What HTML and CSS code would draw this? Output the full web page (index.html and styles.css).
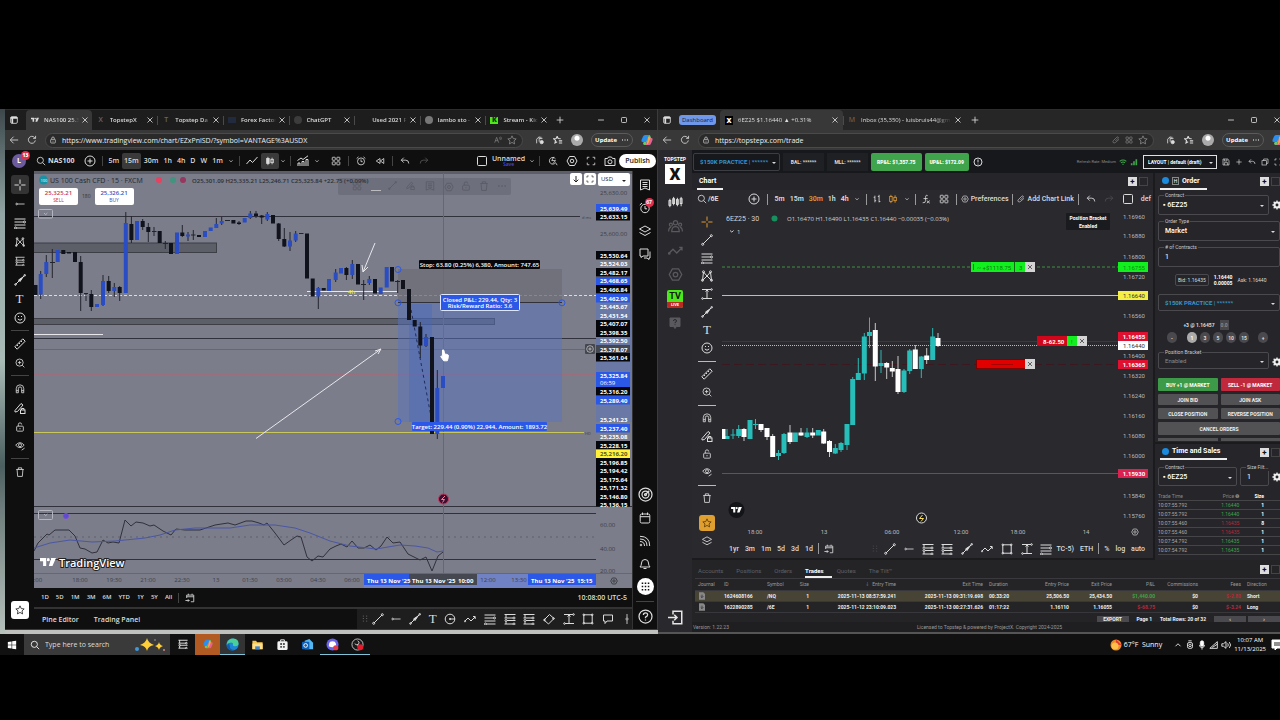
FILE: index.html
```html
<!DOCTYPE html>
<html lang="en">
<head>
    <title>Trading desktop</title>
    <meta charset="UTF-8">
    <link rel="stylesheet" href="styles.css">
</head>
<body>
    <!-- Icon set -->
    <svg class="defs" width="0" height="0">
        <symbol id="win" viewBox="0 0 12 12"><rect x="2" y="2" width="8" height="8" rx="1.5"/><path d="M2 3.500h8M4 4v6" stroke-width="2"/></symbol>
        <symbol id="x" viewBox="0 0 12 12"><path d="M3 3l6 6M9 3l-6 6"/></symbol>
        <symbol id="plus" viewBox="0 0 12 12"><path d="M6 2v8M2 6h8"/></symbol>
        <symbol id="min" viewBox="0 0 12 12"><path d="M2.500 6h7"/></symbol>
        <symbol id="max" viewBox="0 0 12 12"><rect x="3" y="3" width="6" height="6" rx="1"/></symbol>
        <symbol id="back" viewBox="0 0 12 12"><path d="M11 6H2M5.500 2L1.500 6l4 4"/></symbol>
        <symbol id="reload" viewBox="0 0 12 12"><path d="M10 6.500A4.200 4.200 0 1 1 9 3l1.200 1M10.300 1v3h-3"/></symbol>
        <symbol id="lock" viewBox="0 0 12 12"><rect x="2.500" y="5" width="7" height="5.500" rx="1"/><path d="M4 5V3.500a2 2 0 0 1 4 0V5M6 7v1.500"/></symbol>
        <symbol id="unlock" viewBox="0 0 12 12"><rect x="2" y="5" width="8" height="6" rx="1"/><path d="M4 5V3a2 2 0 0 1 4 0M6 7.200v1.600"/></symbol>
        <symbol id="star" viewBox="0 0 12 12"><path d="M6 1l1.500 3.300 3.500.4-2.600 2.400.7 3.600L6 8.900l-3.100 1.800.7-3.600L1 4.700l3.500-.4z"/></symbol>
        <symbol id="starlist" viewBox="0 0 12 12"><path d="M5 1.500l1.200 2.700 3 .3M5 1.500L3.800 4.200l-3 .3L3 6.500l-.6 3L5 8M7 7h4M7 9.500h4" stroke-width="1.300"/></symbol>
        <symbol id="read" viewBox="0 0 12 12"><path d="M1 10l3-8 3 8M2 7h4M8 2q2 1 0 3M10 1q2 2 0 5"/></symbol>
        <symbol id="ext" viewBox="0 0 12 12"><path d="M2 10V5l3-3v6M7 2v3M5 4h4"/><circle cx="8" cy="8.500" r="2" fill="currentColor"/></symbol>
        <symbol id="dots" viewBox="0 0 12 12"><path d="M1.500 6h1.500M5.300 6h1.500M9 6h1.500" stroke-width="1.600"/></symbol>
        <symbol id="copilot" viewBox="0 0 12 12"><g stroke="none"><path d="M4 1h4l-2 7H1.500Q0 8 .5 6L2 2.500Q2.500 1 4 1z" fill="#2a8df0"/><path d="M8 1q1.300 0 1.700 2L10 4H7L5 11H3.500Q2 11 2 9l1-1h2z" fill="#5fd06a"/><path d="M7 4h3.500Q12 4 11.500 6L10 9.500Q9.500 11 8 11H4.500z" fill="#e5609a"/><path d="M7.500 2.500l2 1.500-2 5-2 2z" fill="#f6a93b"/></g></symbol>
        <symbol id="tv" viewBox="0 0 18 10"><path d="M0 0h7v9H3.500V3.500H0zM12.500 0H18l-4 9h-4z" fill="currentColor" stroke="none"/><circle cx="9.300" cy="1.800" r="1.800" fill="currentColor" stroke="none"/></symbol>
        <symbol id="search" viewBox="0 0 12 12"><circle cx="5.200" cy="5.200" r="3.700"/><path d="M8 8l3 3"/></symbol>
        <symbol id="add" viewBox="0 0 12 12"><circle cx="6" cy="6" r="5"/><path d="M6 3.500v5M3.500 6h5"/></symbol>
        <symbol id="chev" viewBox="0 0 12 12"><path d="M3.500 5L6 7.200 8.500 5"/></symbol>
        <symbol id="line" viewBox="0 0 12 12"><path d="M.5 9l3.500-4 2.500 2.500L11.500 2"/></symbol>
        <symbol id="candle" viewBox="0 0 12 12"><path d="M3.500 1v10M8.500 2v8"/><rect x="2" y="3" width="3" height="6" fill="currentColor"/><rect x="7" y="4" width="3" height="4"/></symbol>
        <symbol id="candleo" viewBox="0 0 12 12"><path d="M3.500 1v2M3.500 9v2M8.500 1.500V4M8.500 8v2.500"/><rect x="2" y="3" width="3" height="6"/><rect x="7" y="4" width="3" height="4"/></symbol>
        <symbol id="bars" viewBox="0 0 12 12"><path d="M3.500 2v8M2 4h1.500M3.500 8H5M8.500 1v9M7 3h1.500M8.500 9H10"/></symbol>
        <symbol id="ind" viewBox="0 0 12 12"><path d="M1 11V8h2v3M5 11V6.500h2V11M9 11V4.500h2V11M.5 5.500L4 3l2 1.500L11 .8"/></symbol>
        <symbol id="grid" viewBox="0 0 12 12"><rect x="1.500" y="1.500" width="3.600" height="3.600" rx=".6"/><rect x="7" y="1.500" width="3.600" height="3.600" rx=".6"/><rect x="1.500" y="7" width="3.600" height="3.600" rx=".6"/><rect x="7" y="7" width="3.600" height="3.600" rx=".6"/></symbol>
        <symbol id="alarm" viewBox="0 0 12 12"><circle cx="6" cy="6.500" r="4.200"/><path d="M6 4v2.800h2M.8 3L3 1M9 1l2.200 2"/></symbol>
        <symbol id="rew" viewBox="0 0 12 12"><path d="M6 3v6L1.500 6zM10.500 3v6L6.500 6z"/></symbol>
        <symbol id="undo" viewBox="0 0 12 12"><path d="M4.500 2L1.500 5l3 3M1.500 5H7q3.500 0 3.500 4"/></symbol>
        <symbol id="redo" viewBox="0 0 12 12"><path d="M7.500 2l3 3-3 3M10.500 5H5Q1.500 5 1.500 9"/></symbol>
        <symbol id="downarr" viewBox="0 0 12 12"><path d="M6 1.500v9M2.500 7L6 10.500 9.500 7" stroke-width="1.500"/></symbol>
        <symbol id="box" viewBox="0 0 12 12"><rect x="1.500" y="1.500" width="9" height="9" rx="1"/></symbol>
        <symbol id="flash" viewBox="0 0 12 12"><path d="M9 3.500A4 4 0 1 0 9 8l2 3M7 1L4.500 5.500H9L6 9"/></symbol>
        <symbol id="gear" viewBox="0 0 12 12"><path d="M3.500 1.500h5L11 6l-2.500 4.500h-5L1 6z"/><circle cx="6" cy="6" r="1.800"/></symbol>
        <symbol id="cog" viewBox="0 0 12 12"><circle cx="6" cy="6" r="3" stroke-width="2.500"/><path d="M6 .5v2M6 9.500v2M.5 6h2M9.500 6h2M2 2l1.500 1.500M8.500 8.500L10 10M2 10l1.500-1.500M8.500 3.500L10 2" stroke-width="1.600"/></symbol>
        <symbol id="full" viewBox="0 0 12 12"><path d="M1.500 4V1.500H4M8 1.500h2.500V4M10.500 8v2.500H8M4 10.500H1.500V8"/></symbol>
        <symbol id="cam" viewBox="0 0 12 12"><path d="M1 3.500h2.500l1-1.500h3l1 1.500H11v7H1z"/><circle cx="6" cy="6.800" r="2"/></symbol>
        <symbol id="cross" viewBox="0 0 12 12"><path d="M6 .5v4.300M6 7.200v4.300M.5 6h4.300M7.200 6h4.300"/></symbol>
        <symbol id="hline" viewBox="0 0 12 12"><circle cx="2" cy="6" r="1"/><path d="M3 6h8.500"/></symbol>
        <symbol id="fib" viewBox="0 0 12 12"><path d="M.5 2h11M.5 5h9M.5 8h11M2.500 11h9"/><circle cx="10.500" cy="5" r="1"/><circle cx="1.500" cy="11" r="1"/></symbol>
        <symbol id="pat" viewBox="0 0 12 12"><path d="M1.500 10.500L2.500 2l3.500 4L9.500 2l1 8.500L6 6z"/><circle cx="2.500" cy="1.800" r="1"/><circle cx="9.500" cy="1.800" r="1"/><circle cx="1.500" cy="10.300" r="1"/><circle cx="10.500" cy="10.300" r="1"/></symbol>
        <symbol id="pos" viewBox="0 0 12 12"><path d="M.5 1.500h11M.5 5h8.500M3 7.500h8.500M.5 11h8.500M2 1.500V5M2 8.500V11"/><circle cx="10" cy="5" r="1"/><circle cx="2" cy="7.500" r="1"/><circle cx="10" cy="11" r="1"/></symbol>
        <symbol id="trend" viewBox="0 0 12 12"><path d="M2 10l8-8"/><circle cx="1.700" cy="10.300" r="1"/><circle cx="10.300" cy="1.700" r="1"/></symbol>
        <symbol id="arrow" viewBox="0 0 12 12"><path d="M1.500 10.500l9-9"/><path d="M4.500 6l4.500-3-3 4.500z" fill="currentColor"/><circle cx="1.500" cy="10.500" r=".8"/><circle cx="10.700" cy="1.300" r=".8"/></symbol>
        <symbol id="smile" viewBox="0 0 12 12"><circle cx="6" cy="6" r="5"/><path d="M3.800 7Q6 9.500 8.200 7M4.500 4v1M7.500 4v1"/></symbol>
        <symbol id="ruler" viewBox="0 0 12 12"><path d="M.8 8.800l8-8 2.400 2.400-8 8zM3 7l1 1M5 5l1 1M7 3l1 1"/></symbol>
        <symbol id="zoom" viewBox="0 0 12 12"><circle cx="5.500" cy="5.500" r="4.300"/><path d="M8.700 8.700l2.500 2.500M5.500 3.500v4M3.500 5.500h4"/></symbol>
        <symbol id="magnet" viewBox="0 0 12 12"><path d="M1.500 10.500V5.500a4.500 4.500 0 0 1 9 0v5H8v-5a2 2 0 0 0-4 0v5zM1.500 8H4M8 8h2.500"/></symbol>
        <symbol id="penlock" viewBox="0 0 12 12"><path d="M1 8.500l6-7 2 1.500-5.500 6.500L1 10z"/><rect x="6.500" y="8" width="4.500" height="3.500"/><path d="M7.500 8V6.500h2.500V8"/></symbol>
        <symbol id="eye" viewBox="0 0 12 12"><path d="M.8 5Q6-1 11 5 6 11 .8 5z"/><circle cx="6" cy="5" r="1.800"/><path d="M8 11l3.500-2.500"/></symbol>
        <symbol id="trash" viewBox="0 0 12 12"><path d="M1.500 3h9M4 3V1h4v2M2.500 3l.7 8.300h5.600L9.500 3"/></symbol>
        <symbol id="list" viewBox="0 0 12 12"><path d="M1.500 1h9v10L6 9l-4.500 2zM3.500 3.500h5M3.500 5.500h5M3.500 7.500h5"/></symbol>
        <symbol id="layers" viewBox="0 0 12 12"><path d="M6 1l5.500 3L6 7 .5 4zM.5 7.500L6 10.500l5.500-3"/></symbol>
        <symbol id="chat" viewBox="0 0 12 12"><path d="M1 1h8v7H4L2 9.500V8H1zM11 3.500v6.500h-1v1.500L8 10H5"/></symbol>
        <symbol id="target" viewBox="0 0 12 12"><circle cx="6" cy="6" r="5.200"/><circle cx="6" cy="6" r="2.800"/><path d="M6 6l3-3"/><circle cx="6" cy="6" r=".8"/></symbol>
        <symbol id="cal" viewBox="0 0 12 12"><rect x="1.200" y="2" width="9.600" height="9" rx="1.500"/><path d="M1.200 4.700h9.600M3.500.5V3M8.500.5V3"/></symbol>
        <symbol id="goto" viewBox="0 0 12 12"><path d="M2 6V2.500h8.500V10.500H7M2 4.500h8.500M4 .8v2M8.500.8v2M.5 9h4.500M3.500 7.500L5 9l-1.500 1.500"/></symbol>
        <symbol id="rss" viewBox="0 0 12 12"><circle cx="2" cy="10" r=".8"/><path d="M1 6.500q4.500 0 4.500 4.500M1 4q7 0 7 7M1 1.300q9.700 0 9.700 9.700"/></symbol>
        <symbol id="wifi" viewBox="0 0 12 12"><path d="M1 5q5-4 10 0M3 7.300q3-2.400 6 0M5 9.500h2" stroke-width="1.600"/></symbol>
        <symbol id="signal" viewBox="0 0 12 12"><path d="M2.500 11V8M6 11V5M9.500 11V2" stroke-width="2.500"/></symbol>
        <symbol id="bell" viewBox="0 0 12 12"><path d="M1 9h10Q9.500 7.500 9.500 5a3.500 3.500 0 0 0-7 0Q2.500 7.500 1 9zM4.500 10.500h3"/></symbol>
        <symbol id="apps" viewBox="0 0 12 12"><path d="M2.500 3h1.400M5.300 3h1.400M8.100 3h1.400M2.500 6h1.400M5.300 6h1.400M8.100 6h1.400M2.500 9h1.400M5.300 9h1.400M8.100 9h1.400" stroke-width="1.400"/></symbol>
        <symbol id="help" viewBox="0 0 12 12"><circle cx="6" cy="6" r="5.200"/><path d="M4.300 4.700q0-1.700 1.700-1.700t1.700 1.500Q7.700 5.700 6 6.500v.8M6 8.400v.8"/></symbol>
        <symbol id="helpbox" viewBox="0 0 12 12"><path d="M1 1h10v8.500H7.500L6 11.500 4.500 9.500H1z" fill="currentColor"/><path d="M4.500 4q0-1.500 1.500-1.500T7.500 4Q7.500 5 6 5.500v.7M6 7.300v.8" stroke="#29282c"/></symbol>
        <symbol id="info" viewBox="0 0 12 12"><circle cx="6" cy="6" r="4.800"/><path d="M6 3v3.500M6 8v1"/></symbol>
        <symbol id="wave" viewBox="0 0 12 12"><path d="M1 8l3-3 3 3 4-4M9 3.500h2.200V6"/><circle cx="1" cy="8.300" r=".6"/></symbol>
        <symbol id="circ" viewBox="0 0 12 12"><circle cx="6" cy="6" r="4.800"/><circle cx="6" cy="6" r=".7"/><path d="M6 6h5"/></symbol>
        <symbol id="rot" viewBox="0 0 12 12"><path d="M1 7l5.500-5.500 4.500 4L5.500 11z"/><circle cx="1.500" cy="7" r=".8"/><circle cx="10.500" cy="5.500" r=".8"/></symbol>
        <symbol id="measure" viewBox="0 0 12 12"><path d="M1 1.500h9M2 10.500h9M6 2v8M4.500 3.500L6 2l1.500 1.500"/><circle cx="10.500" cy="1.500" r=".8"/><circle cx="1.500" cy="10.500" r=".8"/></symbol>
        <symbol id="rect" viewBox="0 0 12 12"><rect x="1.800" y="1.800" width="8.400" height="8.400"/><circle cx="1.800" cy="1.800" r=".8"/><circle cx="10.200" cy="1.800" r=".8"/><circle cx="1.800" cy="10.200" r=".8"/><circle cx="10.200" cy="10.200" r=".8"/></symbol>
        <symbol id="flag" viewBox="0 0 12 12"><path d="M1.500 2h9v6H5l-2 2.500V8H1.500z"/></symbol>
        <symbol id="vline" viewBox="0 0 12 12"><path d="M6 0v4.500M6 7.500V12"/><circle cx="6" cy="6" r="1.300"/></symbol>
        <symbol id="grip" viewBox="0 0 12 12"><path d="M4 2v1M4 5v1M4 8v1M8 2v1M8 5v1M8 8v1"/></symbol>
        <symbol id="oc" viewBox="0 0 16 14"><path d="M2 3v9M6 1v9M10 2v9M14 1v10"/><rect x="1" y="5" width="2" height="5"/><rect x="5" y="3" width="2" height="5"/><rect x="9" y="4" width="2" height="5"/><rect x="13" y="3" width="2" height="5"/></symbol>
        <symbol id="people" viewBox="0 0 12 12"><circle cx="6" cy="3" r="1.700"/><circle cx="2.300" cy="4.500" r="1.200"/><circle cx="9.700" cy="4.500" r="1.200"/><path d="M3 10q0-4 3-4t3 4zM.5 10q0-3 2-3.500M11.500 10q0-3-2-3.500"/></symbol>
        <symbol id="exit" viewBox="0 0 12 12"><path d="M4 3.500V1h7v10H4V8.500M0 6h7M5 3.800L7.200 6 5 8.200" stroke-width="1.200"/></symbol>
        <symbol id="link" viewBox="0 0 12 12"><path d="M5 7.500L9 3.500Q10 2 9 1.500T7 2L2 7Q.5 9 2 10t3.500-.5L10.500 5"/></symbol>
        <symbol id="fx" viewBox="0 0 12 12"><path d="M8 2Q5.500.5 5.500 4v4q0 3-3.500 2.500M3 5.500h5M7 8l3.500 3M10.500 8L7 11"/></symbol>
        <symbol id="save" viewBox="0 0 12 12"><path d="M1.500 1.500h7l2 2v7h-9zM3.500 1.500v3h4v-3M3.500 10.500V7h5v3.500"/></symbol>
        <symbol id="copy" viewBox="0 0 12 12"><rect x="1.500" y="4" width="6.500" height="6.500"/><path d="M4 4V1.500h6.500V8H8"/></symbol>
        <symbol id="doc" viewBox="0 0 12 12"><path d="M1.500.5H8l2.500 2.500v8.500h-9z" fill="currentColor" stroke="none"/><path d="M6 4v4M4 6.500L6 8.500l2-2" stroke="#222"/></symbol>
    </svg>

    <main class="stage">
        <div class="desktop">
            <div class="wall"></div>

            <!-- Left browser -->
            <section class="window tvwin">
                <div class="tabstrip">
                    <svg class="i lead"><use href="#win"/></svg>
                    <div class="tabs">
                        <div class="tab on"><svg class="fav"><use href="#tv"/></svg><span>NAS100 25.3</span><button><svg class="i"><use href="#x"/></svg></button></div>
                        <div class="tab nosep"><i class="fav dim">X</i><span>TopstepX</span><button><svg class="i"><use href="#x"/></svg></button></div>
                        <div class="tab"><i class="fav dim">T</i><span>Topstep Da</span><button><svg class="i"><use href="#x"/></svg></button></div>
                        <div class="tab"><i class="fav navy"></i><span>Forex Factor</span><button><svg class="i"><use href="#x"/></svg></button></div>
                        <div class="tab"><i class="fav round"></i><span>ChatGPT</span><button><svg class="i"><use href="#x"/></svg></button></div>
                        <div class="tab"><i class="fav"></i><span>Used 2021 F</span><button><svg class="i"><use href="#x"/></svg></button></div>
                        <div class="tab"><i class="fav round grey"></i><span>lambo sto -</span><button><svg class="i"><use href="#x"/></svg></button></div>
                        <div class="tab"><i class="fav kick">K</i><span>Stream - Kic</span><button><svg class="i"><use href="#x"/></svg></button></div>
                    </div>
                    <button class="newtab"><svg class="i"><use href="#plus"/></svg></button>
                    <div class="winbtns"><button><svg class="i"><use href="#min"/></svg></button><button><svg class="i"><use href="#max"/></svg></button><button><svg class="i"><use href="#x"/></svg></button></div>
                </div>
                <div class="address">
                    <button class="nav"><svg class="i"><use href="#back"/></svg></button>
                    <button class="nav"><svg class="i"><use href="#reload"/></svg></button>
                    <div class="urlbar">
                        <svg class="i sm"><use href="#lock"/></svg>
                        <input type="text" aria-label="Address" value="https://www.tradingview.com/chart/EZxPnlSD/?symbol=VANTAGE%3AUSDX">
                        <svg class="i sm dimmed"><use href="#read"/></svg><svg class="i dimmed"><use href="#star"/></svg>
                    </div>
                    <svg class="i"><use href="#ext"/></svg><svg class="i"><use href="#starlist"/></svg>
                    <i class="avatar"></i>
                    <button class="update">Update <svg class="i sm"><use href="#dots"/></svg></button>
                    <svg class="i big"><use href="#copilot"/></svg>
                </div>

                <div class="tvtop">
                    <div class="user">L<b class="badge">13</b></div>
                    <button class="sym"><svg class="i"><use href="#search"/></svg>NAS100</button>
                    <button class="ic plusic"><svg class="i big"><use href="#add"/></svg></button>
                    <i class="sep"></i>
                    <div class="times"><button>5m</button><button class="on">15m</button><button>30m</button><button>1h</button><button>4h</button><button>D</button><button>W</button><button>1m</button><svg class="i sm"><use href="#chev"/></svg></div>
                    <i class="sep"></i>
                    <button class="ic"><svg class="i big"><use href="#line"/></svg></button>
                    <button class="ic on"><svg class="i"><use href="#candle"/></svg></button>
                    <svg class="i sm"><use href="#chev"/></svg>
                    <i class="sep"></i>
                    <button class="ic wide"><svg class="i big"><use href="#ind"/></svg></button>
                    <svg class="i sm spaced"><use href="#chev"/></svg>
                    <button class="ic"><svg class="i"><use href="#grid"/></svg></button>
                    <i class="sep"></i>
                    <button class="ic wide"><svg class="i"><use href="#alarm"/></svg></button>
                    <button class="ic"><svg class="i"><use href="#rew"/></svg></button>
                    <i class="sep"></i>
                    <button class="ic wide"><svg class="i"><use href="#undo"/></svg></button>
                    <button class="ic dark"><svg class="i"><use href="#redo"/></svg></button>
                    <div class="tvright">
                        <svg class="i big"><use href="#box"/></svg>
                        <div class="layoutname">Unnamed<a href="#">Save</a></div>
                        <svg class="i sm"><use href="#chev"/></svg>
                        <i class="sep"></i>
                        <button class="ic wide"><svg class="i"><use href="#flash"/></svg></button>
                        <button class="ic wide"><svg class="i big"><use href="#gear"/></svg></button>
                        <button class="ic wide"><svg class="i"><use href="#full"/></svg></button>
                        <button class="ic wide"><svg class="i big"><use href="#cam"/></svg></button>
                        <button class="publish">Publish</button>
                    </div>
                </div>

                <div class="tvmain">
                    <nav class="tools">
                        <button class="on"><svg class="i big"><use href="#cross"/></svg></button>
                        <button><svg class="i"><use href="#hline"/></svg></button>
                        <button><svg class="i big"><use href="#fib"/></svg></button>
                        <button><svg class="i"><use href="#pat"/></svg></button>
                        <button><svg class="i"><use href="#pos"/></svg></button>
                        <button><svg class="i big"><use href="#arrow"/></svg></button>
                        <button class="t">T</button>
                        <button><svg class="i big"><use href="#smile"/></svg></button>
                        <hr>
                        <button><svg class="i big"><use href="#ruler"/></svg></button>
                        <button><svg class="i"><use href="#zoom"/></svg></button>
                        <hr>
                        <button><svg class="i"><use href="#magnet"/></svg></button>
                        <button><svg class="i big"><use href="#penlock"/></svg></button>
                        <button><svg class="i"><use href="#unlock"/></svg></button>
                        <button><svg class="i"><use href="#eye"/></svg></button>
                        <hr>
                        <button><svg class="i"><use href="#trash"/></svg></button>
                        <button class="fave"><svg class="i"><use href="#star"/></svg></button>
                    </nav>

                    <div class="center">
                        <div class="chart">
                            <svg class="plot" viewBox="34 171 598 417">
                                <path d="M34 172.500h598" class="edge"/>
                                <!-- zones and levels -->
                                <rect x="30" y="243" width="186.500" height="9.500" class="zone"/>
                                <rect x="30" y="318.500" width="464.500" height="6" class="zone"/>
                                <path d="M34 216.500H580M34 338.500H596M34 506.500H632M34 513.500H596M34 559.500H596" class="level"/>
                                <path d="M34 349.500H585M443.500 173V573M34 573.500H632" class="faint"/>
                                <path d="M34 374.500H596" class="redline"/>
                                <path d="M34 537H596" class="rsimid"/>
                                <path d="M34 432.500H584" class="yellow"/>
                                <path d="M34 295.500H596" class="whitedash"/>
                                <path d="M34 334.500H103M307 291.500H397" class="white"/>
                                <rect x="398" y="269" width="164" height="33.500" class="stopbox"/>
                                <rect x="398" y="302.500" width="164" height="119.500" class="targetbox"/>
                                <rect x="409" y="304" width="23" height="118" class="targetdeep"/>
                                <rect x="596" y="302" width="36" height="120" class="targetbox"/>
                                <path d="M398 302.500H562" class="level"/>
                                <path d="M410 304L432 422" class="dashdark"/>
                                <!-- candles -->
                                <path class="wick" d="M40.700 271V299M46.300 255V277M52.300 249V278M80.700 256V311M86 293V301M91.300 290V311M103 275V306M108.700 276V293M114.300 283V297M119.700 286V301M125.800 212V293M131.400 216V243M142.700 219V230M148.300 223V242M154 227V236M165.300 241V249M182.300 225V237M188 232V241M193.300 230V240M216.300 218V228M221.700 217V225M239 221V225M250.300 211V219M256 211V218M261.700 215V224M267.300 212V221M278.700 223V241M284.300 228V247M290 232V251M295.700 231V242M318.300 287V309M335.700 269V282M346.400 267V280M352.300 260V279M363.700 280V300M369.300 276V285M397.700 280V293M420.300 322V358M426 334V347M437.300 370V439"/>
                                <path class="wick" d="M50 262.500h5M84 293.500h4M152 231.500h4.500M163 243.500h5M191 235h4.500M225 220.500h5M299 233.500h4.500M361 284.500h5M395 281.500h5"/>
                                <path class="down" d="M35.500 285V295M63.300 250V254M69 252V253.500M75 252V262M80.700 262V293M91.300 294V307M108.700 281V291M119.700 287V293M131.400 224V240M142.700 221V227M148.300 227V232M159.700 231V243M171 243V254M182.300 232.500V236M199 235V237M233.400 220V223.500M239 222.500V224M256 213.500V216M261.700 215.500V217.500M273 215V223.500M278.700 223.500V239M284.300 239V246.500M307 233.500V278.500M312.700 278.500V296.500M323.700 288V290.500M346.400 268V275M358 264V284.500M375 279V293.500M392 267V281.500M403 280V289M409 289V320M414.700 320V326.500M420.300 326.500V345.500M432 337V434"/>
                                <path class="up" d="M40.700 274V294.500M46.300 262V274M57.700 250V262M97 304V307M103 281V305M114.300 287V291M125.800 223V293M137 221V240M177 232.500V254M188 234.500V236.500M205 231V237M210.700 227.500V231M216.300 224V228M221.700 221V223.500M244.700 218V222.500M250.300 213.500V218M267.300 214V219.500M290 240.500V246.500M295.700 233.500V240.500M318.300 288V296.500M329 279V291M335.700 272.500V280M341 268V273.500M352.300 264V275M369.300 279V283M380.700 287.500V294M386.700 267V287.500M426 337V346M437.300 388V434M443 376V388"/>
                                <!-- drawings -->
                                <path class="white" d="M256 438.500L381 349M375 351l6-2-3 5M375 243l-12 29M362 265l1 7 5-5"/>
                                <text x="348" y="294" class="tag gold">4h</text>
                                <g class="handles"><circle cx="398" cy="269.500" r="3"/><circle cx="398" cy="302.800" r="3"/><circle cx="562" cy="302.800" r="3"/><circle cx="398" cy="421.500" r="3"/></g>
                                <rect x="419" y="260" width="121" height="9" rx="1" class="k"/>
                                <text x="479.500" y="267" class="tag mid">Stop: 63.80 (0.25%) 6,380, Amount: 747.65</text>
                                <rect x="440.500" y="294.500" width="79" height="16" rx="1" class="b outlined"/>
                                <text x="480" y="302" class="tag mid">Closed P&amp;L: 229.44, Qty: 3</text>
                                <text x="480" y="308" class="tag mid">Risk/Reward Ratio: 3.6</text>
                                <rect x="412" y="422" width="135" height="9" rx="1" class="b"/>
                                <text x="479.500" y="429" class="tag mid">Target: 229.44 (0.90%) 22,944, Amount: 1893.72</text>
                                <circle cx="443.500" cy="499" r="5" fill="#3a1030" stroke="#c03a60"/><path d="M445 496l-3.500 3.500h3l-2 3" stroke="#ff7b9c" fill="none"/>
                                <path class="hand" d="M442.500 350q1.200-.6 1.500.8l.6 3.200 2 .3 1.800.9-.3 3-.8 2.600h-3.600l-1.600-2.300-1.400-2q.6-.9 1.700.2z"/>
                                <!-- rsi -->
                                <path class="rsi" d="M34 551L38 543 47 534 49 535 55 530H69L75 536 80 548 85 549 92 553 97 552 103 540 108 543 113 542 119 543 125 520 131 526 136 522 143 523 150 526 154 525 163 531 171 535 176 529 185 530H200L215 525 228 523 235 525 246 521H252L259 523 264 525 267 523 275 533 284 545 291 540 297 536 301 537 307 557 312 561 318 556 323 557 330 549 336 546 341 544 347 547 352 541 358 548H364L370 545 376 550 381 546 387 537 393 543 400 542 408 554 420 560 426 557 432 571 438 556 443 552"/>
                                <path class="rsima" d="M34 548L50 543 70 540 92 542 115 541 145 538 160 535 175 530 195 528H230L250 525H275L295 528 310 533 330 541 350 546 376 549 400 545 415 546 428 548 437 552 443 551"/>
                                <rect x="38.500" y="510.500" width="14" height="9" rx="1" class="ghost"/><path d="M44 514l1.700 1.700 1.700-1.700" class="ghost"/>
                                <circle cx="66" cy="516" r="2.500" fill="#5a4fc8" stroke="#7a4be0"/>
                                <svg x="40" y="558" width="16" height="9" color="#fff"><use href="#tv"/></svg>
                                <text x="59" y="566.500" class="brand">TradingView</text>
                                <!-- legend -->
                                <circle cx="43.500" cy="180" r="4.500" fill="#1793a5"/><text x="40.500" y="182" class="tiny">100</text>
                                <text x="50" y="182.500" class="title">US 100 Cash CFD · 15 · FXCM</text>
                                <circle cx="159" cy="180" r="3" fill="#e8405f"/><circle cx="173" cy="180" r="3" fill="#41957f"/><circle cx="183" cy="180" r="3" fill="#96375f"/>
                                <rect x="338" y="178" width="173" height="17" rx="2" fill="#5e606b" opacity=".45"/>
                                <text x="192" y="182.500" class="ohlc">O25,301.09 H25,335.21 L25,246.71 C25,325.84 +22.75 (+0.09%)</text>
                                <g class="floaticons">
                                    <use href="#grid" x="352" y="181" width="10" height="10"/><path d="M371 190.500h10" stroke="#ddd"/><use href="#trend" x="388" y="181" width="9" height="9"/><use href="#penlock" x="406" y="181" width="9" height="9"/><use href="#list" x="425" y="181" width="10" height="10"/><use href="#gear" x="444" y="182" width="10" height="10"/><use href="#unlock" x="461" y="181" width="10" height="10"/><use href="#trash" x="479" y="181" width="10" height="10"/><use href="#dots" x="497" y="181" width="10" height="10"/>
                                </g>
                                <rect x="38.500" y="209.500" width="14" height="8.500" rx="1" class="ghost"/><path d="M44 213l1.700 1.700 1.700-1.700" class="ghost"/>
                                <text x="582" y="218.500" class="tiny dk">d ms</text><text x="585" y="434.500" class="tiny dk">HD</text>
                                <rect x="585" y="344" width="10" height="10" rx="1" fill="#45474f"/><use href="#add" x="586" y="345" width="8" height="8" class="wh"/>
                                <!-- price axis -->
                                <g class="k"><rect x="596" y="212" width="34" height="8.500"/><rect x="596" y="251" width="34" height="8.500"/><rect x="596" y="268" width="34" height="8.500"/><rect x="596" y="285" width="34" height="8.500"/><rect x="596" y="320" width="34" height="17"/><rect x="596" y="353" width="34" height="8.500"/><rect x="596" y="387" width="34" height="8.500"/><rect x="596" y="441" width="34" height="8.500"/><rect x="596" y="458" width="34" height="48.500"/></g>
                                <g class="b"><rect x="596" y="204" width="34" height="8"/><rect x="596" y="277" width="34" height="8"/><rect x="596" y="294" width="34" height="8.500"/><rect x="596" y="372" width="34" height="15"/><rect x="596" y="396" width="34" height="8.500"/><rect x="596" y="424" width="34" height="8.500"/></g>
                                <rect x="596" y="345" width="34" height="8" fill="#454850"/><rect x="596" y="449.500" width="34" height="8.500" fill="#fff13a"/>
                                <g class="axis"><text x="600" y="194.500">25,630.00</text><text x="600" y="235.500">25,600.00</text><text x="600" y="526.500">60.00</text><text x="600" y="550.500">40.00</text><text x="600" y="573">20.00</text></g>
                                <g class="price">
                                    <text x="600" y="210.500">25,639.49</text><text x="600" y="218.500">25,633.15</text><text x="600" y="257.500">25,530.64</text><text x="600" y="266">25,524.03</text><text x="600" y="274.500">25,482.17</text><text x="600" y="283">25,468.65</text><text x="600" y="291.500">25,466.84</text><text x="600" y="300.500">25,462.90</text><text x="600" y="309">25,445.67</text><text x="600" y="317.500">25,431.54</text><text x="600" y="326">25,407.07</text><text x="600" y="334.500">25,398.35</text><text x="600" y="343">25,392.50</text><text x="600" y="351.500">25,378.07</text><text x="600" y="359.500">25,361.04</text><text x="600" y="378">25,325.84</text><text x="600" y="385" class="thin">06:59</text><text x="600" y="393.500">25,316.20</text><text x="600" y="402.500">25,289.40</text><text x="600" y="421.500">25,241.23</text><text x="600" y="430.500">25,237.40</text><text x="600" y="438.500">25,235.08</text><text x="600" y="447.500">25,228.15</text><text x="600" y="456" class="onyellow">25,216.20</text><text x="600" y="464.500">25,196.85</text><text x="600" y="473">25,194.42</text><text x="600" y="481.500">25,175.64</text><text x="600" y="490">25,171.32</text><text x="600" y="498.500">25,146.80</text><text x="600" y="506.500">25,136.15</text>
                                </g>
                                <!-- time axis -->
                                <g class="axis mid"><text x="38" y="582">:00</text><text x="80" y="582">18:00</text><text x="114" y="582">19:30</text><text x="148" y="582">21:00</text><text x="182" y="582">22:30</text><text x="216" y="582">13</text><text x="250" y="582">01:30</text><text x="284" y="582">03:00</text><text x="318" y="582">04:30</text><text x="352" y="582">06:00</text></g>
                                <rect x="364" y="574" width="232" height="14" fill="#7182c4"/>
                                <g class="axis mid"><text x="488" y="582">12:00</text><text x="519" y="582">13:30</text></g>
                                <rect x="364" y="574" width="45" height="11" class="b"/><rect x="409" y="574" width="68" height="11" fill="#454850"/><rect x="528" y="574" width="68" height="11" class="b"/>
                                <g class="price"><text x="367" y="582.500">Thu 13 Nov '25</text><text x="412" y="582.500">Thu 13 Nov '25</text><text x="458" y="582.500">10:00</text><text x="531" y="582.500">Thu 13 Nov '25</text><text x="577" y="582.500">15:15</text></g>
                                <use href="#gear" x="610" y="577" width="8" height="8" class="bk"/>
                            </svg>
                            <div class="trade"><button class="sell">25,325.21<small>SELL</small></button><span>180</span><button class="buy">25,326.21<small>BUY</small></button></div>
                            <div class="currency"><button><svg class="i sm"><use href="#downarr"/></svg></button><button><svg class="i sm"><use href="#full"/></svg></button><span class="pick"><select aria-label="Currency"><option>USD</option></select></span></div>
                        </div>
                        <div class="ranges"><button>1D</button><button>5D</button><button>1M</button><button>3M</button><button>6M</button><button>YTD</button><button>1Y</button><button>5Y</button><button>All</button><i class="sep"></i><svg class="i"><use href="#goto"/></svg><time>10:08:00 UTC-5</time></div>
                        <div class="footer">
                            <button>Pine Editor</button><button>Trading Panel</button>
                            <div class="drawbar"><svg class="i dimmed grip"><use href="#grip"/></svg><svg class="i big"><use href="#trend"/></svg><svg class="i"><use href="#hline"/></svg><svg class="i big"><use href="#arrow"/></svg><b>T</b><svg class="i big"><use href="#circ"/></svg><svg class="i big"><use href="#wave"/></svg><svg class="i big"><use href="#fib"/></svg><svg class="i big"><use href="#pos"/></svg><svg class="i big"><use href="#pos"/></svg><svg class="i big"><use href="#rot"/></svg><svg class="i big"><use href="#measure"/></svg><svg class="i big"><use href="#rect"/></svg><svg class="i big"><use href="#flag"/></svg><svg class="i"><use href="#vline"/></svg></div>
                        </div>
                    </div>

                    <nav class="side">
                        <button><svg class="i big"><use href="#list"/></svg></button>
                        <button><svg class="i big"><use href="#alarm"/></svg><b class="badge">67</b></button>
                        <button><svg class="i big"><use href="#layers"/></svg></button>
                        <button><svg class="i big"><use href="#chat"/></svg></button>
                        <button class="push"><svg class="i huge"><use href="#target"/></svg></button>
                        <button><svg class="i big"><use href="#cal"/></svg></button>
                        <button><svg class="i big"><use href="#rss"/></svg></button>
                        <button><svg class="i big"><use href="#bell"/></svg></button>
                        <button><svg class="i apps"><use href="#apps"/></svg></button>
                        <hr>
                        <button><svg class="i huge"><use href="#help"/></svg></button>
                    </nav>
                </div>
            </section>

            <!-- Right browser -->
            <section class="window tswin">
                <div class="tabstrip">
                    <svg class="i lead"><use href="#win"/></svg>
                    <a class="group" href="#">Dashboard</a>
                    <div class="tab wide on"><i class="fav xfav">X</i><span>6EZ25 $1.16440 ▲ +0.31%</span><button><svg class="i"><use href="#x"/></svg></button></div>
                    <div class="tab wide mail"><i class="fav m">M</i><span>Inbox (35,350) - luisbruis44@gm</span><button><svg class="i"><use href="#x"/></svg></button></div>
                    <button class="newtab"><svg class="i"><use href="#plus"/></svg></button>
                    <div class="winbtns"><button><svg class="i"><use href="#min"/></svg></button><button><svg class="i"><use href="#max"/></svg></button><button><svg class="i"><use href="#x"/></svg></button></div>
                </div>
                <div class="address">
                    <button class="nav"><svg class="i"><use href="#back"/></svg></button>
                    <button class="nav"><svg class="i"><use href="#reload"/></svg></button>
                    <div class="urlbar">
                        <svg class="i sm"><use href="#lock"/></svg>
                        <input type="text" aria-label="Address" value="https://topstepx.com/trade">
                        <svg class="i sm dimmed"><use href="#link"/></svg><svg class="i sm dimmed"><use href="#grid"/></svg><svg class="i dimmed"><use href="#star"/></svg>
                    </div>
                    <svg class="i"><use href="#ext"/></svg><svg class="i"><use href="#starlist"/></svg>
                    <i class="avatar"></i>
                    <button class="update">Update <svg class="i sm"><use href="#dots"/></svg></button>
                    <svg class="i big"><use href="#copilot"/></svg>
                </div>

                <div class="ts">
                    <nav class="rail">
                        <strong>TOPSTEP</strong>
                        <div class="xlogo">X</div>
                        <button class="lit"><svg class="i huge"><use href="#oc"/></svg></button>
                        <button><svg class="i huge"><use href="#people"/></svg></button>
                        <button><svg class="i huge"><use href="#wave"/></svg></button>
                        <button><svg class="i huge"><use href="#gear"/></svg></button>
                        <div class="live">TV<small>LIVE</small></div>
                        <button><svg class="i big"><use href="#helpbox"/></svg></button>
                        <button class="push lit"><svg class="i huge"><use href="#exit"/></svg></button>
                    </nav>

                    <div class="app">
                        <header class="acct">
                            <span class="pick acctpick"><select aria-label="Account"><option>$150K PRACTICE | ******</option></select></span>
                            <span class="cell">BAL: ******</span><span class="cell">MLL: ******</span>
                            <b class="pl">RP&amp;L: $1,357.75</b><b class="pl">UP&amp;L: $172.09</b>
                            <button class="infobtn"><svg class="i"><use href="#info"/></svg></button>
                            <div class="acctright">
                                <small>Refresh Rate: Medium</small><svg class="i sm green"><use href="#wifi"/></svg><svg class="i sm green"><use href="#signal"/></svg>
                                <span class="pick laypick"><select aria-label="Layout"><option>LAYOUT | default (draft)</option></select></span>
                                <svg class="i sm"><use href="#save"/></svg><svg class="i sm"><use href="#plus"/></svg><svg class="i sm"><use href="#undo"/></svg><svg class="i sm"><use href="#copy"/></svg><svg class="i sm"><use href="#full"/></svg>
                            </div>
                        </header>

                        <div class="cols">
                            <div class="chartcol">
                                <div class="phead"><b class="ptab">Chart</b><button class="plusbox">+</button><button class="emptybox"></button></div>
                                <div class="tsbar">
                                    <button class="sym"><svg class="i"><use href="#search"/></svg>/6E</button>
                                    <button class="ic"><svg class="i big"><use href="#add"/></svg></button>
                                    <i class="sep"></i>
                                    <div class="times"><button>5m</button><button>15m</button><button class="sel">30m</button><button>1h</button><button>4h</button><svg class="i sm"><use href="#chev"/></svg></div>
                                    <i class="sep"></i>
                                    <svg class="i"><use href="#bars"/></svg><svg class="i orange"><use href="#candleo"/></svg><svg class="i sm"><use href="#chev"/></svg>
                                    <i class="sep"></i>
                                    <svg class="i"><use href="#fx"/></svg><svg class="i roomy"><use href="#grid"/></svg>
                                    <i class="sep"></i>
                                    <button class="word"><svg class="i sm"><use href="#gear"/></svg>Preferences</button>
                                    <i class="sep"></i>
                                    <button class="word"><svg class="i sm"><use href="#link"/></svg>Add Chart Link</button>
                                    <i class="sep"></i>
                                    <svg class="i roomy"><use href="#undo"/></svg><svg class="i fade"><use href="#redo"/></svg><svg class="i big roomy"><use href="#box"/></svg><span>def</span>
                                </div>
                                <div class="tsbody">
                                    <nav class="tools tstools">
                                        <button class="orange"><svg class="i big"><use href="#cross"/></svg></button>
                                        <button><svg class="i big"><use href="#trend"/></svg></button>
                                        <button><svg class="i big"><use href="#fib"/></svg></button>
                                        <button><svg class="i big"><use href="#pat"/></svg></button>
                                        <button><svg class="i big"><use href="#measure"/></svg></button>
                                        <button><svg class="i big"><use href="#arrow"/></svg></button>
                                        <button class="t">T</button>
                                        <button><svg class="i big"><use href="#smile"/></svg></button>
                                        <hr>
                                        <button><svg class="i big"><use href="#ruler"/></svg></button>
                                        <button><svg class="i"><use href="#zoom"/></svg></button>
                                        <hr>
                                        <button><svg class="i"><use href="#magnet"/></svg></button>
                                        <button><svg class="i big"><use href="#penlock"/></svg></button>
                                        <button><svg class="i"><use href="#unlock"/></svg></button>
                                        <button><svg class="i"><use href="#eye"/></svg></button>
                                        <hr>
                                        <button><svg class="i"><use href="#trash"/></svg></button>
                                        <button class="goldbox"><svg class="i"><use href="#star"/></svg></button>
                                        <button><svg class="i"><use href="#layers"/></svg></button>
                                    </nav>
                                    <div class="tsplot">
                                        <svg class="plot" viewBox="722 208 431 331">
                                            <path d="M722 267H1118" stroke="#3f9143" stroke-dasharray="3 2"/>
                                            <path d="M722 295.500H1118" stroke="#cfcc40"/>
                                            <path d="M722 341.500H1118" stroke="#8b1230"/>
                                            <path d="M722 345.500H1118" stroke="#bbb" stroke-dasharray="1 1"/>
                                            <path d="M722 364.500H1118" stroke="#3c1820" stroke-dasharray="8 4"/>
                                            <path d="M722 473.500H1118" stroke="#c02450"/>
                                            <path class="twick" d="M727 429V439M733 429V439M738.700 425V438M755.500 419V429M778.500 450V460M784 433V454M807 428V438M835.300 444V454M841 442V452M847 424V450M852.700 377V425M858.300 358V380M864.300 333V380M869.500 317.500V348M881 350V373M904 369V393M909.700 349V374M921.300 356V378M932.700 328V360"/>
                                            <path class="wwick" d="M744 428V441M761 424V432M767 428V440M772.700 434V457M790 425V444M801 428V436M812.700 428V438M823.700 429V444M829.500 440V457M875.300 323V381M886.700 362V379M892.300 361V377M898 356V394M915.300 345V369M926.700 348V364M938 333V347"/>
                                            <path class="teal" d="M727 436V439M733 434.500V435.500M738.700 429V436M750 420V439M755.500 424V425M778.500 453V456M784 434V453M795.300 432.500V442M807 432.500V437M818.300 430V435.500M835.300 448V453.500M841 443V450M847 424V445M852.700 379V425M858.300 373V380M864.300 336.500V373.500M869.500 332V336M881 363V366M904 370.500V392M909.700 350.500V371M921.300 356.500V369M932.700 336.500V360"/>
                                            <path class="snow" d="M723 429V439M744 429V437M761 424V430M767 428V437M772.700 436V457M790 432.500V442M801 432.500V435.500M812.700 432.500V435.500M823.700 431.500V443.500M829.500 441V452M875.300 330V366.500M886.700 363V367.500M892.300 368V371.500M898 369V392M915.300 349.500V369M926.700 355.500V360M938 338V346"/>
                                            <!-- order tags -->
                                            <rect x="971" y="262" width="54" height="10" fill="#12ef1e"/><path d="M973.500 264v6M1014.500 262v10" stroke="#0b6a10"/><text x="977" y="269.500" class="ordertxt">~ +$1118.75</text><text x="1019" y="269.500" class="ordertxt">3</text>
                                            <rect x="1025" y="262" width="10" height="10" fill="#d4d4d4"/><use href="#x" x="1026" y="263" width="8" height="8" class="bk"/>
                                            <rect x="1037" y="336" width="30" height="10" fill="#d2061b"/><text x="1043" y="343.500" class="b6">8-62.50</text><rect x="1067" y="336" width="10" height="10" fill="#12ef1e"/><text x="1071" y="343.500" class="ordertxt">!</text>
                                            <rect x="1077" y="336" width="10" height="10" fill="#d4d4d4"/><use href="#x" x="1078" y="337" width="8" height="8" class="bk"/>
                                            <rect x="976.500" y="359.500" width="49" height="9" fill="#e00000" stroke="#7d0000"/><path d="M991 364.500h22" stroke="#a40000"/>
                                            <rect x="1025" y="359" width="10" height="10" fill="#d4d4d4"/><use href="#x" x="1026" y="360" width="8" height="8" class="bk"/>
                                            <g class="scale"><text x="1134" y="218.500">1.16960</text><text x="1134" y="238">1.16880</text><text x="1134" y="258.500">1.16800</text><text x="1134" y="278.500">1.16720</text><text x="1134" y="318">1.16560</text><text x="1134" y="358">1.16400</text><text x="1134" y="378">1.16320</text><text x="1134" y="398">1.16240</text><text x="1134" y="418">1.16160</text><text x="1134" y="438">1.16080</text><text x="1134" y="458">1.16000</text><text x="1134" y="498">1.15840</text><text x="1134" y="518">1.15760</text></g>
                                            <rect x="1118" y="262" width="30" height="10" fill="#12ef1e"/><rect x="1118" y="291" width="30" height="9" fill="#f4ee45"/><rect x="1118" y="332" width="30" height="9" fill="#e01030"/><rect x="1118" y="341" width="30" height="9" fill="#fff"/><rect x="1118" y="360" width="30" height="9" fill="#e01030"/><rect x="1118" y="469" width="30" height="9" fill="#dc2050"/>
                                            <g class="scale tagged"><text x="1134" y="269.500">1.16755</text><text x="1134" y="298">1.16640</text><text x="1134" y="339">1.16455</text><text x="1134" y="348">1.16440</text><text x="1134" y="367">1.16365</text><text x="1134" y="476">1.15930</text></g>
                                            <!-- time scale -->
                                            <g class="scale"><text x="755" y="533.500">18:00</text><text x="824" y="533.500">13</text><text x="892" y="533.500">06:00</text><text x="961" y="533.500">12:00</text><text x="1018" y="533.500">18:00</text><text x="1086" y="533.500">14</text></g>
                                            <use href="#gear" x="1131" y="528" width="8" height="8" class="wh"/>
                                            <circle cx="736.500" cy="510" r="8" fill="#131417"/><svg x="731" y="507" width="11" height="6" color="#fff"><use href="#tv"/></svg>
                                            <circle cx="921.500" cy="518" r="5" fill="#1c1c1c" stroke="#ddd"/><path d="M922.500 515l-3 3.500h4l-2.500 3" fill="none" stroke="#ffe04a"/>
                                            <!-- legend -->
                                            <text x="726" y="221" class="sname">6EZ25 · 30</text><circle cx="774.500" cy="218.500" r="3" fill="#16905f"/>
                                            <text x="787" y="221" class="sohlc">O1.16470 H1.16490 L1.16435 C1.16440 −0.00035 (−0.03%)</text>
                                            <path d="M730 230.500l1.800 1.600 1.800-1.600" fill="none" stroke="#ccc"/><text x="737" y="233.500" class="sohlc">1</text>
                                            <rect x="1066" y="213" width="44" height="17" rx="1" fill="#1a1b1f"/><text x="1088" y="220" class="b5 mid">Position Bracket</text><text x="1088" y="227.500" class="b5 mid">Enabled</text>
                                        </svg>
                                        <div class="tsranges">
                                            <button>1yr</button><button>3m</button><button>1m</button><button>5d</button><button>3d</button><button>1d</button><i class="sep"></i><svg class="i"><use href="#goto"/></svg>
                                            <div class="tsdraw"><svg class="i dark grip"><use href="#grip"/></svg><svg class="i big"><use href="#trend"/></svg><svg class="i"><use href="#hline"/></svg><svg class="i big"><use href="#pos"/></svg><svg class="i big"><use href="#pos"/></svg><svg class="i big"><use href="#arrow"/></svg><svg class="i big"><use href="#wave"/></svg><svg class="i big"><use href="#rect"/></svg><svg class="i big"><use href="#measure"/></svg><svg class="i big"><use href="#fib"/></svg></div>
                                            <button>TC-5)</button><button>ETH</button><i class="sep"></i><button>%</button><button>log</button><button>auto</button>
                                        </div>
                                    </div>
                                </div>
                            </div>

                            <aside class="ordercol">
                                <div class="phead"><b class="ptab"><i class="blue"></i><i class="hbox">H</i>Order</b><button class="plusbox">+</button><button class="emptybox"></button></div>
                                <div class="order">
                                    <div class="withcog"><div class="field pick"><label for="contract">Contract</label><select id="contract"><option>▪ 6EZ25</option></select></div><svg class="i"><use href="#cog"/></svg></div>
                                    <div class="field pick"><label for="otype">Order Type</label><select id="otype"><option>Market</option></select></div>
                                    <div class="field"><label for="qty"># of Contracts</label><input id="qty" type="text" value="1"></div>
                                    <div class="quote"><span class="bid">Bid: 1.16435</span><span class="spread">1.16440<br>0.00005</span><span>Ask: 1.16440</span></div>
                                    <div class="field pick acc"><select aria-label="Order account"><option>$150K PRACTICE | ******</option></select></div>
                                    <div class="avg">+3 @ 1.16457 <i>0.0</i></div>
                                    <div class="nums"><button class="minus">-</button><button class="on">1</button><button>3</button><button>5</button><button>10</button><button>15</button><button class="more">+</button></div>
                                    <div class="withcog"><div class="field pick mini"><label for="bracket">Position Bracket</label><select id="bracket"><option>Enabled</option></select></div><svg class="i"><use href="#cog"/></svg></div>
                                    <div class="actions">
                                        <button class="buybtn">BUY +1 @ MARKET</button><button class="sellbtn">SELL -1 @ MARKET</button>
                                        <button>JOIN BID</button><button>JOIN ASK</button>
                                        <button>CLOSE POSITION</button><button>REVERSE POSITION</button>
                                        <button class="all">CANCEL ORDERS</button>
                                        <i></i><i></i>
                                    </div>
                                </div>
                                <div class="phead second"><b class="ptab"><i class="blue"></i>Time and Sales</b><button class="plusbox">+</button><button class="emptybox"></button></div>
                                <div class="order">
                                    <div class="withcog ts2"><div class="field pick"><label for="contract2">Contract</label><select id="contract2"><option>▪ 6EZ25</option></select></div><div class="field size"><label for="fil">Size Filt...</label><input id="fil" type="text" value="1"></div><svg class="i"><use href="#cog"/></svg></div>
                                    <table class="sales">
                                        <tr><th>Trade Time</th><th>Price ❶</th><th>Size</th></tr>
                                        <tr><td>10:07:55.792</td><td class="g">1.16440</td><td>1</td></tr>
                                        <tr><td>10:07:55.792</td><td class="g">1.16440</td><td>1</td></tr>
                                        <tr><td>10:07:55.460</td><td class="r">1.16435</td><td>8</td></tr>
                                        <tr><td>10:07:55.460</td><td class="r">1.16435</td><td>1</td></tr>
                                        <tr><td>10:07:54.792</td><td class="g">1.16435</td><td>1</td></tr>
                                        <tr><td>10:07:54.792</td><td class="g">1.16435</td><td>1</td></tr>
                                    </table>
                                </div>
                            </aside>
                        </div>

                        <div class="bottom">
                            <div class="btabs"><a href="#">Accounts</a><a href="#">Positions</a><a href="#">Orders</a><a href="#" class="on">Trades</a><a href="#">Quotes</a><a href="#">The Tilt™</a><button class="plusbox">+</button><button class="emptybox"></button></div>
                            <div class="tradewrap">
                                <table class="trades">
                                    <colgroup><col class="c1"><col class="c2"><col class="c3"><col class="c3"><col class="c4"><col class="c4"><col class="c2"><col class="c2"><col class="c2"><col class="c2"><col class="c2"><col class="c2"><col></colgroup>
                                    <tr><th>Journal</th><th>ID</th><th>Symbol</th><th class="n">Size</th><th class="n">🡓 &nbsp; Entry Time</th><th class="n">Exit Time</th><th>Duration</th><th class="n">Entry Price</th><th class="n">Exit Price</th><th class="n">P&amp;L</th><th class="n">Commissions</th><th class="n">Fees</th><th>Direction</th></tr>
                                    <tr class="hl"><td><svg class="i sm"><use href="#doc"/></svg></td><td>1624608166</td><td>/NQ</td><td class="n">1</td><td class="n">2025-11-13 08:57:59.241</td><td class="n">2025-11-13 09:31:19.698</td><td>00:33:20</td><td class="n">25,506.50</td><td class="n">25,434.50</td><td class="n g">$1,440.00</td><td class="n">$0</td><td class="n r">$-2.80</td><td>Short</td></tr>
                                    <tr><td><svg class="i sm"><use href="#doc"/></svg></td><td>1622890285</td><td>/6E</td><td class="n">1</td><td class="n">2025-11-12 23:10:09.023</td><td class="n">2025-11-13 00:27:31.626</td><td>01:17:22</td><td class="n">1.16110</td><td class="n">1.16055</td><td class="n r">$-68.75</td><td class="n">$0</td><td class="n r">$-3.24</td><td>Long</td></tr>
                                    <tr><td></td><td></td><td></td><td></td><td></td><td></td><td></td><td></td><td></td><td></td><td></td><td></td><td></td></tr>
                                </table>
                            </div>
                            <div class="pager"><button>EXPORT</button><span>Page 1</span><span>Total Rows: 20 of 32</span><button>‹</button><button class="next">›</button></div>
                        </div>
                        <footer class="legal"><span>Version: 1.22.23</span><span>Licensed to Topstep &amp; powered by ProjectX. Copyright 2024-2025</span></footer>
                    </div>
                </div>
            </section>
        </div>

        <!-- Taskbar -->
        <div class="taskbar">
            <button class="start"><svg viewBox="0 0 12 12"><path d="M1 2.500l4.500-.8v4H1zM6.200 1.600L11 .9v4.800H6.200zM1 6.300h4.500v4L1 9.600zM6.200 6.300H11v4.900l-4.800-.8z" fill="#fff"/></svg></button>
            <div class="find"><svg class="i"><use href="#search"/></svg><input type="text" aria-label="Search" value="Type here to search"><svg class="spark" viewBox="0 0 32 14"><path d="M13 0q1 5 7 7-6 1-7 6-1-5-7-6 6-2 7-7z" fill="#ffcf3a"/><path d="M25 4q.6 3 4 4-3.400 1-4 4-.6-3-4-4 3.400-1 4-4z" fill="#ffcf3a"/><circle cx="3" cy="11" r="2" fill="#3f98d8"/><circle cx="21" cy="2" r="1" fill="#777"/><circle cx="30" cy="12" r="1" fill="#c88"/></svg></div>
            <button class="task"><svg class="i"><use href="#pos"/></svg></button>
            <button class="task cop"><svg class="i big"><use href="#copilot"/></svg></button>
            <button class="task run lit"><svg viewBox="0 0 14 14"><circle cx="7" cy="7" r="6.500" fill="#1d87d6"/><path d="M.6 7Q2 .5 8 .6q5.500.6 5.500 5.400 0 3-4 3-2 0-2-1.500Q8 4.500 4.500 5T.6 7z" fill="#4bcf9a"/><path d="M4 8q0 5 6 5-5 1.500-8-1.500T4 5q-1 1 0 3z" fill="#0f5fae"/></svg></button>
            <button class="task"><svg viewBox="0 0 14 14"><path d="M1.500 3h4l1 1.500h6V12h-11z" fill="#f5c84c"/><path d="M1.500 6h11v6h-11z" fill="#ffe08a"/><path d="M4.500 9h5v3h-5z" fill="#3f86cc"/></svg></button>
            <button class="task"><svg viewBox="0 0 14 14"><path d="M5 4V2h4v2" fill="none" stroke="#fff"/><rect x="1.500" y="3.500" width="11" height="9.500" rx="1.500" fill="#f2f2f2"/><path d="M4.500 5.500h2v2h-2zM7.500 5.500h2v2h-2zM4.500 8.500h2v2h-2zM7.500 8.500h2v2h-2z" fill="#555"/></svg></button>
            <button class="task"><svg viewBox="0 0 14 14"><path d="M4 3l5-2 4 4v7H4z" fill="#53b8f2"/><rect x="1" y="4" width="8" height="8" rx="1" fill="#0f62b8"/><circle cx="5" cy="8" r="2" fill="none" stroke="#fff"/></svg></button>
            <button class="task run"><svg viewBox="0 0 14 14"><circle cx="7" cy="7" r="6.500" fill="#6a62e8"/><path d="M3 9q0-4 1.500-5 2.500-1 5 0Q11 5 11 9q-4 2-8 0z" fill="#fff"/><circle cx="10.500" cy="10.500" r="2.800" fill="#e23c4a"/></svg></button>
            <button class="task run"><svg viewBox="0 0 14 14"><circle cx="7" cy="7" r="6" fill="#1b1b1b" stroke="#ccc"/><path d="M7 3q3 1 1 4-3 1-4-1M7 7q0 3 3 3" fill="none" stroke="#ccc"/><circle cx="10" cy="10" r="3.200" fill="#e31b2e"/></svg></button>
            <div class="tray">
                <svg class="i big" viewBox="0 0 12 12"><circle cx="6" cy="6" r="5.500" fill="#f08a24" stroke="none"/><path d="M6 .5v5.500h5.500" fill="#e13b30" stroke="none"/><circle cx="5" cy="7" r="3.500" fill="#ffc04a" stroke="none"/></svg>
                <span class="weather">67°F&nbsp; Sunny</span>
                <svg class="i" viewBox="0 0 12 12"><path d="M3 7.500L6 4.500l3 3"/></svg>
                <svg class="i" viewBox="0 0 12 12"><rect x="3" y="3" width="6" height="7" rx="2"/><circle cx="6" cy="6.500" r="1.500"/><path d="M4 1h4"/></svg>
                <svg class="i" viewBox="0 0 12 12"><rect x="4" y="1" width="4" height="6.500" rx="2" fill="#fff"/><path d="M3 6q0 3 3 3t3-3M6 9v2.500"/></svg>
                <svg class="i" viewBox="0 0 12 12"><path d="M1 10L10 2v8zM4 9L10 5"/></svg>
                <svg class="i" viewBox="0 0 12 12"><path d="M1 4.500h2L6 2v8L3 7.500H1zM8 4q1.500 2 0 4M10 2.500q3 3.500 0 7"/></svg>
                <time>10:07 AM<br>11/13/2025</time>
                <svg class="i big note" viewBox="0 0 12 12"><path d="M1 1h10v8H6l-2 2V9H1z" fill="#fff"/><path d="M3 4h6M3 6h6" stroke="#222"/></svg>
            </div>
        </div>
    </main>
</body>
</html>
```
FILE: styles.css
```css
/* Base */
* {
    box-sizing: border-box;
}
body {
    margin: 0;
    background-color: #000;
    color: #dcdcdc;
    font-family: "Open Sans", "Noto Sans", sans-serif;
    font-size: 7px;
    line-height: 9px;
    overflow-x: hidden;
}
button, input, select {
    font: inherit;
    color: inherit;
    background: none;
    border: 0;
    padding: 0;
    margin: 0;
    min-width: 0;
}
select {
    appearance: none;
}
button {
    display: flex;
    align-items: center;
    justify-content: center;
    cursor: pointer;
    white-space: nowrap;
}
a {
    color: inherit;
    text-decoration: none;
}
i {
    font-style: normal;
}
.defs {
    position: absolute;
}
.i {
    width: 10px;
    height: 10px;
    flex: none;
    fill: none;
    stroke: currentColor;
    stroke-width: 1;
}
.i.sm { width: 8px; height: 8px; }
.i.big { width: 12px; height: 12px; }
.i.huge { width: 15px; height: 15px; }
.dimmed { color: #888; }
.stage {
    padding-top: 109px;
}
.desktop {
    display: grid;
    grid-template-columns: 5px minmax(0, 653fr) minmax(0, 622fr);
    height: 525px;
    background: #bfc1be;
}
.wall {
    background: linear-gradient(#3c474b, #91a5a4 20%, #a9bcb6 48%, #4c5f60 68%, #6e7d7b 76%, #b8c2bd);
}
.window {
    display: flex;
    flex-direction: column;
    overflow: hidden;
}
.tvwin {
    height: 521px;
    background: #0f0f0f;
    border-right: 1px solid #3b3b3b;
    border-bottom: 1px solid #3b3b3b;
}
.tswin {
    border-bottom: 2px solid #555;
    background: #242426;
}

/* Browser chrome */
.tabstrip {
    display: flex;
    align-items: center;
    height: 21px;
    flex: none;
    background: #1d1d1d;
    padding-left: 4px;
    border-top: 1px solid #2d2d2d;
    font-weight: 600;
    font-size: 6px;
}
.tswin .tabstrip { background: #262626; }
.lead { margin-right: 7px; }
.tabs {
    display: flex;
    width: 525px;
    height: 100%;
}
.tab {
    display: flex;
    align-items: center;
    flex: 1;
    min-width: 0;
    padding: 0 2px 0 5px;
    position: relative;
}
.tab span {
    flex: 1;
    overflow: hidden;
    white-space: nowrap;
    margin-right: 1px;
    mask-image: linear-gradient(90deg, #000 80%, transparent);
}
.tab + .tab:not(.nosep)::before {
    content: "";
    position: absolute;
    left: 0;
    top: 6px;
    height: 9px;
    border-left: 1px solid #4a4a4a;
}
.tab.on { background: #383838; border-radius: 4px 4px 0 0; }
.fav {
    flex: none;
    width: 8px;
    height: 6px;
    margin-right: 5px;
    font-size: 7px;
    line-height: 6px;
    text-align: center;
}
.fav.dim { color: #666; }
.fav.navy { background: #222b3d; }
.fav.round { background: #3c3c3c; height: 8px; border-radius: 4px; }
.fav.grey { background: #777; }
.fav.kick { background: #4be81a; color: #0c3604; font-weight: 800; height: 7px; }
.fav.xfav { background: #000; color: #fff; height: 9px; line-height: 9px; font-weight: 800; }
.fav.m { color: #8a6a48; }
.newtab { margin: 0 4px; }
.winbtns {
    display: flex;
    gap: 13px;
    margin-left: auto;
    padding-right: 5px;
}
.tswin .winbtns { margin-right: -7px; }
.group {
    background: #6f97ea;
    color: #16233f;
    border-radius: 3px;
    line-height: 10px;
    padding: 0 3px;
    margin-right: 4px;
    font-weight: 400;
}
.tab.wide {
    flex: none;
    width: 123px;
    height: 100%;
    padding-right: 3px;
    font-weight: 400;
}
.address {
    display: flex;
    align-items: center;
    gap: 8px;
    height: 20px;
    flex: none;
    background: #383838;
    padding: 0 4px;
    font-weight: 600;
}
.urlbar {
    display: flex;
    align-items: center;
    gap: 5px;
    flex: 1;
    height: 15px;
    background: #2a2a2a;
    border: 1px solid #4a4a4a;
    border-radius: 8px;
    padding: 0 5px 0 3px;
    margin-right: 4px;
}
.urlbar input { flex: 1; font-weight: 400; color: #eee; }
.avatar {
    width: 12px;
    height: 12px;
    border-radius: 6px;
    background: radial-gradient(circle at 50% 35%, #fff 0 2px, #aaa 3px);
}
.update {
    gap: 4px;
    height: 14px;
    padding: 0 3px;
    border: 1px solid #5b5b5b;
    border-radius: 7px;
    color: #fff;
    font-size: 6px;
    font-weight: 700;
}
.tswin .address { padding-right: 0; margin-right: -4px; }

/* Chart site, top bar */
.tvtop {
    display: flex;
    align-items: center;
    height: 21px;
    flex: none;
    padding: 0 1px 0 7px;
    font-weight: 700;
}
.user {
    position: relative;
    width: 14px;
    height: 14px;
    border-radius: 7px;
    background: #6b5b9c;
    line-height: 14px;
    text-align: center;
    color: #fff;
}
.badge {
    position: absolute;
    top: -3px;
    left: 9px;
    width: 9px;
    height: 9px;
    border-radius: 5px;
    background: #e0304e;
    color: #fff;
    font-size: 5px;
    line-height: 9px;
    text-align: center;
}
.sym { gap: 2px; margin-left: 10px; font-weight: 700; }
.ic { width: 18px; height: 16px; border-radius: 2px; flex: none; }
.ic.wide { width: 19px; }
.plusic { margin-left: 7px; }
.ic.on, .times .on { background: #3a3a3a; }
.ic.dark { color: #555; }
.spaced { margin-right: 6px; }
.sep {
    width: 1px;
    height: 10px;
    margin: 0 3px;
    background: #444;
    flex: none;
}
.times { display: flex; align-items: center; gap: 1px; font-weight: 600; }
.times button { height: 16px; padding: 0 2px; border-radius: 2px; }
.times .i { margin: 0 1px; }
.tvright { display: flex; align-items: center; margin-left: auto; }
.layoutname {
    display: flex;
    flex-direction: column;
    align-items: center;
    margin: 0 3px 0 4px;
    line-height: 7px;
    font-size: 7px;
    font-weight: 600;
}
.layoutname a { color: #4a48e0; font-size: 5px; line-height: 5px; }
.publish {
    height: 14px;
    padding: 0 6px;
    border-radius: 7px;
    background: #fff;
    color: #222;
    font-weight: 600;
}

/* Chart site, body */
.tvmain {
    display: grid;
    grid-template-columns: 29px minmax(0, 1fr) 24px;
    flex: 1;
}
.tools {
    display: flex;
    flex-direction: column;
    align-items: center;
    padding: 4px 0 10px;
}
.tools button { width: 18px; height: 19px; border-radius: 3px; }
.tools .on { background: #333; }
.tools hr, .side hr {
    width: 18px;
    height: 1px;
    margin: 3px 0;
    border: 0;
    background: #444;
}
.t { font-family: "Liberation Serif", serif; font-size: 13px; }
.tools .fave { margin-top: auto; height: 18px; background: #fff; color: #222; }
.center { display: flex; flex-direction: column; border-right: 1px solid #333; }
.chart { position: relative; background: #7b7d8a; }
.plot { display: block; width: 100%; height: auto; }
.edge { stroke: #5d5f68; stroke-width: 3; }
.zone { fill: #5c5e68; stroke: #3d3e46; stroke-width: 1; }
.level { stroke: #30313a; stroke-width: 1; }
.faint { stroke: #656772; stroke-width: 1; }
.redline { stroke: #9a6d7c; stroke-width: 1; stroke-dasharray: 1 1; }
.rsimid { stroke: #5e606c; stroke-dasharray: 2 4; }
.yellow { stroke: #c9c65a; stroke-width: 1; }
.white { stroke: #e8e8ec; stroke-width: 1; fill: none; }
.whitedash { stroke: #dcdce0; stroke-width: 1; stroke-dasharray: 3 2; }
.stopbox { fill: #6c6d75; opacity: .75; }
.targetbox { fill: #5873c0; opacity: .5; }
.targetdeep { fill: #3f66c8; opacity: .3; }
.dashdark { stroke: #1d2c5c; stroke-dasharray: 3 3; }
.wick { stroke: #23252d; stroke-width: 1; }
.down { stroke: #11131c; stroke-width: 4; }
.up { stroke: #2a4dc4; stroke-width: 4; }
.k { fill: #07070b; }
.b { fill: #2c58e8; }
.outlined { stroke: #dfe6ff; }
.handles { fill: none; stroke: #2c58e8; stroke-width: 1; }
.hand { fill: #fff; stroke: #fff; stroke-width: 1; }
.rsi { fill: none; stroke: #30313c; stroke-width: 1; }
.rsima { fill: none; stroke: #4b57a4; stroke-width: 1; }
.ghost { fill: none; stroke: #b4b5be; }
.tag { font-size: 6px; font-weight: 600; fill: #fff; }
.mid { text-anchor: middle; }
.gold { fill: #e8e24a; }
.brand {
    font-size: 11px;
    font-weight: 600;
    fill: #fff;
    stroke: #222;
    stroke-width: 2;
    paint-order: stroke;
}
.tiny { font-size: 4px; fill: #fff; }
.title { font-size: 7px; fill: #24262d; }
.ohlc { font-size: 6px; font-weight: 600; fill: #2c2e36; }
.axis text { font-size: 6px; fill: #3c3e48; }
.dk { fill: #3c3e48; }
.price { font-size: 6px; font-weight: 700; fill: #fff; }
.onyellow { fill: #555522; }
.thin { font-weight: 400; }
.floaticons, .bk, .wh { fill: none; stroke: #50525c; }
.floaticons { opacity: .7; }
.bk { stroke: #222; }
.wh { stroke: #ddd; }
.trade {
    position: absolute;
    left: 5px;
    top: 17px;
    display: flex;
    align-items: center;
    gap: 4px;
    font-size: 5px;
    color: #333;
}
.trade button {
    flex-direction: column;
    width: 39px;
    height: 17px;
    border-radius: 2px;
    background: #fff;
    font-size: 6px;
    line-height: 7px;
    font-weight: 600;
}
.trade small { font-size: 5px; line-height: 6px; font-weight: 400; }
.sell { color: #c8304c; }
.buy { color: #3a4fc0; }
.currency {
    position: absolute;
    right: 2px;
    top: 2px;
    display: flex;
    gap: 2px;
    color: #222;
}
.currency button { width: 12px; height: 12px; background: #fff; border-radius: 2px; }
.currency select { width: 32px; height: 13px; padding-left: 3px; background: #fff; border-radius: 2px; font-size: 6px; }
.pick { position: relative; display: block; }
.pick::after {
    content: "";
    position: absolute;
    right: 4px;
    top: 50%;
    border: 2px solid transparent;
    border-top-color: currentColor;
    pointer-events: none;
}
.ranges {
    display: flex;
    align-items: center;
    gap: 7px;
    height: 19px;
    padding: 0 5px 0 7px;
    font-weight: 600;
    font-size: 6px;
}
.ranges .sep { margin: 0 -1px; }
.ranges time { margin-left: auto; font-size: 7px; }
.footer {
    display: flex;
    align-items: stretch;
    flex: 1;
    border-top: 2px solid #333;
    padding-left: 8px;
    gap: 15px;
    font-weight: 600;
}
.drawbar {
    display: flex;
    align-items: center;
    justify-content: space-between;
    width: 275px;
    margin-left: auto;
    background: #1e1e1e;
    padding-left: 3px;
}
.drawbar b { font: 13px "Liberation Serif", serif; }
.drawbar .grip { margin-right: -6px; }
.side {
    display: flex;
    flex-direction: column;
    align-items: center;
    padding: 2px 0 1px;
}
.side button { position: relative; width: 23px; height: 23px; }
.side .badge { left: 11px; top: 2px; }
.push { margin-top: auto; }
.apps { width: 17px; height: 17px; padding: 2px; border-radius: 9px; background: #fff; color: #111; }
.side .apps { width: 17px; height: 17px; }

/* Broker app */
.ts {
    display: grid;
    grid-template-columns: 34px minmax(0, 1fr);
    flex: 1;
    min-height: 0;
    font-family: Roboto, "Open Sans", sans-serif;
    font-size: 6px;
    line-height: 8px;
}
.rail {
    display: flex;
    flex-direction: column;
    align-items: center;
    padding: 5px 0 3px;
    background: #29282c;
    color: #5a5a5e;
}
.rail strong { color: #fff; font-size: 5px; line-height: 9px; }
.xlogo {
    width: 20px;
    height: 20px;
    margin-bottom: 6px;
    background: #fff;
    color: #111;
    font-size: 17px;
    font-weight: 900;
    line-height: 20px;
    text-align: center;
}
.rail button { width: 24px; height: 24px; }
.rail .lit { color: #e6e6e6; }
.live {
    width: 16px;
    margin: 4px 0 3px;
    border-radius: 2px;
    overflow: hidden;
    background: #4be81a;
    color: #101510;
    font-size: 9px;
    font-weight: 700;
    line-height: 12px;
    text-align: center;
}
.live small { display: block; background: #b92a22; color: #fff; font-size: 4px; line-height: 6px; }
.app { display: flex; flex-direction: column; min-width: 0; }
.acct {
    display: flex;
    align-items: center;
    gap: 3px;
    height: 23px;
    padding-left: 1px;
    background: #16181c;
    font-weight: 700;
}
.acctpick select {
    width: 87px;
    height: 18px;
    padding-left: 6px;
    border: 1px solid #3b3d42;
    border-radius: 2px;
    color: #3794c8;
    font-size: 6px;
}
.cell { width: 41px; text-align: center; font-size: 5px; line-height: 18px; background: #1e2024; }
.pl {
    height: 18px;
    padding: 0 5px;
    border-radius: 2px;
    background: #3fa44c;
    color: #fff;
    font-size: 5px;
    line-height: 18px;
}
.cell + .pl { padding: 0 6px; }
.infobtn { width: 13px; height: 14px; color: #fff; }
.acctright { display: flex; align-items: center; gap: 5px; margin-left: auto; margin-right: -2px; white-space: nowrap; }
.acctright small { color: #8c8c8c; font-size: 4px; font-weight: 400; margin-right: -2px; }
.acctright .green { margin-right: -2px; }
.laypick { margin-left: 2px; }
.green { color: #3fa44c; }
.laypick select { width: 74px; height: 14px; padding-left: 4px; border: 1px solid #e0e0e0; font-size: 5px; color: #fff; }
.cols {
    display: grid;
    grid-template-columns: minmax(0, 1fr) 127px;
    height: 387px;
    background: #1b1b1e;
}
.phead {
    display: flex;
    align-items: center;
    gap: 2px;
    height: 17px;
    padding: 0 5px;
    background: #26262a;
}
.ordercol .phead { padding-right: 0; }
.ptab {
    display: flex;
    align-items: center;
    gap: 3px;
    height: 16px;
    margin-right: auto;
    padding: 0 7px 0 2px;
    border-bottom: 2px solid #eee;
    color: #fff;
    font-size: 7px;
}
.plusbox { width: 9px; height: 9px; background: #ddd; color: #111; font-weight: 900; font-size: 8px; line-height: 9px; }
.emptybox { width: 9px; height: 9px; border: 1px solid #444; }
.chartcol { background: #2a292e; margin-bottom: 2px; }
.tsbar {
    display: flex;
    align-items: center;
    gap: 4px;
    height: 18px;
    padding: 0 3px 0 5px;
    overflow: hidden;
    font-size: 7px;
    font-weight: 500;
    white-space: nowrap;
}
.tsbar button { flex: none; }
.tsbar .sym { margin: 0 22px 0 0; gap: 1px; }
.tsbar .sep, .tsranges .sep { background: #999; height: 11px; margin: 0; }
.tsbar > .i { margin: 0 1px; }
.tsbar > .i.sm { margin: 0; }
.tsbar > .i.roomy { margin: 0 3px; }
.tsbar .word { gap: 2px; }
.tsbar .times { margin-left: 1px; }
.orange { color: #e09a30; }
.times .sel { color: #e09a30; }
.fade { color: #4c4c50; }
.tsbody { display: grid; grid-template-columns: 30px minmax(0, 1fr); }
.tstools { padding: 5px 0 0; }
.tstools button { height: 18px; }
.tools.tstools hr { background: #bbb; margin: 4px 0 3px; }
.tools.tstools .goldbox { width: 16px; height: 16px; margin: 8px 0 1px; background: #e0a030; color: #5d3c05; }
.twick { stroke: #2bb9b4; }
.wwick { stroke: #c8c8c8; }
.teal { stroke: #27bdb8; stroke-width: 5; }
.snow { stroke: #fff; stroke-width: 5; }
.scale text { font-size: 6px; fill: #b8b8bc; text-anchor: middle; }
.scale.tagged text:nth-child(1) { fill: #0b8d14; }
.scale.tagged text:nth-child(2), .scale.tagged text:nth-child(4) { fill: #333; }
.scale.tagged text:nth-child(3), .scale.tagged text:nth-child(5), .scale.tagged text:nth-child(6) { fill: #fff; font-weight: 700; }
.ordertxt { font-size: 6px; fill: #0b7a12; }
.b5 { font-size: 5px; font-weight: 700; fill: #fff; }
.b6 { font-size: 6px; font-weight: 700; fill: #fff; }
.sname { font-size: 7px; fill: #d4d4d6; }
.sohlc { font-size: 6px; font-weight: 500; fill: #d4d4d6; font-family: "Open Sans", sans-serif; }
.tsranges { display: flex; align-items: center; gap: 6px; height: 19px; padding: 0 8px 0 7px; font-size: 7px; font-weight: 500; }
.tsranges .sep { margin: 0 -1px; }
.tsdraw { display: flex; align-items: center; justify-content: space-between; width: 182px; margin: 0 -2px 0 auto; }
.tsdraw .dark { color: #555; }
.tsdraw .grip { margin-right: -4px; }

/* Order column */
.ordercol {
    margin-left: 2px;
    background: #26262a;
    overflow: hidden;
}
.order { padding: 5px 0 0 3px; }
.blue { width: 7px; height: 7px; border-radius: 4px; background: #1b8be0; }
.hbox { width: 7px; border: 1px solid #888; font-size: 5px; line-height: 6px; text-align: center; font-weight: 400; }
.field {
    position: relative;
    flex: 1;
    min-width: 0;
    height: 20px;
    margin-bottom: 6px;
    border: 1px solid #4a4a4e;
    border-radius: 2px;
}
.field label {
    position: absolute;
    left: 5px;
    top: -5px;
    padding: 0 1px;
    background: #26262a;
    color: #c8c8c8;
    font-size: 5px;
    line-height: 8px;
    white-space: nowrap;
}
.field select, .field input { width: 100%; height: 100%; padding-left: 6px; color: #fff; font-size: 7px; font-weight: 500; }
.field input { font-weight: 400; }
.withcog { display: flex; gap: 3px; }
.withcog .i { margin: 5px -2px 0 0; color: #eee; }
.withcog .field select { padding-left: 4px; }
.withcog .mini select { padding-left: 6px; font-size: 6px; color: #888; font-weight: 400; }
.quote { display: flex; align-items: center; gap: 5px; padding: 0 20px 0 17px; height: 13px; font-size: 5px; white-space: nowrap; }
.bid { padding: 1px 2px; border: 1px solid #4a4a4e; border-radius: 2px; }
.spread { line-height: 6px; font-weight: 700; color: #fff; }
.field.acc { height: 17px; margin: 8px 0 9px; }
.field.acc select { color: #3794c8; font-size: 6px; font-weight: 700; }
.avg { display: flex; justify-content: center; gap: 5px; padding-right: 26px; height: 10px; font-size: 5px; line-height: 10px; font-weight: 700; }
.avg i { width: 9px; background: #48484c; color: #888; text-align: center; }
.nums { display: flex; gap: 3px; padding: 2px 0 0 9px; height: 22px; }
.nums button { width: 10px; height: 11px; border-radius: 6px; background: #4a4a4e; font-size: 5px; font-weight: 700; }
.nums .minus { margin-right: 7px; }
.nums .more { margin-left: 6px; }
.nums .on { background: #aaa; color: #fff; }
.field.mini { height: 17px; margin-bottom: 9px; }
.actions { display: grid; grid-template-columns: 1fr 1fr; gap: 3px; font-size: 5px; font-weight: 700; }
.actions button { height: 11px; border-radius: 1px; background: #525254; color: #eee; }
.actions .buybtn, .actions .sellbtn { height: 13px; color: #fff; }
.actions .buybtn { background: #3c9a49; }
.actions .sellbtn { background: #c0283c; }
.actions .all { grid-column: span 2; height: 13px; }
.actions i { height: 3px; background: #525254; }
.second { margin-top: 1px; border-top: 2px solid #1b1b1e; height: 18px; }
.second + .order { padding-top: 7px; }
.ts2 .field { height: 19px; }
.ts2 .size { flex: none; width: 29px; }
.sales { width: 100%; border-collapse: collapse; table-layout: fixed; font-size: 5px; line-height: 8px; color: #aaa; }
.sales th { font-weight: 400; color: #888; padding: 0; }
.sales th, .sales td { text-align: left; padding: 0; border-bottom: 1px solid #454548; }
.sales th:nth-child(n+2) { text-align: right; }
.sales td:nth-child(n+2) { text-align: right; }
.sales th:nth-child(3), .sales td:nth-child(3) { color: #fff; padding-right: 16px; font-weight: 700; }
.g { color: #3fa44c; }
.r { color: #b62a3c; }

/* Trades panel */
.bottom { height: 62px; background: #242427; overflow: hidden; padding: 1px 0 0 3px; }
.btabs { display: flex; align-items: center; gap: 2px; height: 17px; padding: 0 0 0 3px; font-size: 6px; color: #606065; }
.btabs a { height: 16px; line-height: 17px; padding-right: 8px; margin-right: 3px; }
.btabs .on { color: #fff; font-weight: 700; border-bottom: 2px solid #eee; }
.btabs .plusbox { margin-left: auto; }
.tradewrap { height: 38px; overflow: hidden; border-top: 1px solid #3a3a3e; }
.trades { width: 100%; border-collapse: collapse; table-layout: fixed; font-size: 5px; white-space: nowrap; font-weight: 700; color: #eee; }
.trades th { height: 11px; padding: 0 3px; font-weight: 400; color: #999; text-align: left; }
.trades td { height: 11px; padding: 0 3px; border-top: 1px solid #38383c; line-height: 8px; }
.trades td svg { display: block; color: #888; }
.trades .n { text-align: right; }
.trades td.g { color: #3fa44c; }
.trades td.r { color: #b62a3c; }
.trades .hl td { background: #474335; }
.c1 { width: 26px; }
.c2 { width: 43px; }
.c3 { width: 24px; }
.c4 { width: 87px; }
.pager { display: flex; justify-content: flex-end; gap: 8px; height: 6px; overflow: hidden; font-size: 5px; line-height: 6px; font-weight: 700; color: #eee; }
.pager button { width: 32px; height: 6px; background: #4a4a4e; }
.pager .next { margin-left: -6px; }
.legal { display: flex; height: 10px; padding-left: 1px; font-size: 5px; line-height: 10px; color: #999; background: #1f1f22; }
.legal span:last-child { margin: 0 auto; padding-right: 30px; }

/* Taskbar */
.taskbar {
    display: flex;
    height: 21px;
    background: #111;
    color: #fff;
    overflow: hidden;
}
.start { width: 24px; }
.start svg { width: 10px; height: 10px; }
.find { display: flex; align-items: center; gap: 5px; width: 146px; padding: 0 4px 0 6px; background: #3a3a3a; }
.find input { flex: 1; font-size: 7px; color: #ddd; }
.spark { width: 32px; height: 14px; flex: none; }
.task { width: 25px; border-bottom: 1px solid transparent; }
.task > svg { width: 13px; height: 13px; }
.task > .i { width: 10px; height: 10px; }
.task.cop { background: #b15a22; }
.task.lit { background: #333; }
.task.run { border-bottom: 1px solid #7fc4d8; }
.tray { display: flex; align-items: center; gap: 2px; margin-left: auto; font-size: 7px; line-height: 9px; }
.weather { margin: 0 9px 0 0; white-space: nowrap; }
.tray time { text-align: center; margin: 0 3px 0 1px; font-size: 6px; }
.note { margin-right: -3px; }
```
